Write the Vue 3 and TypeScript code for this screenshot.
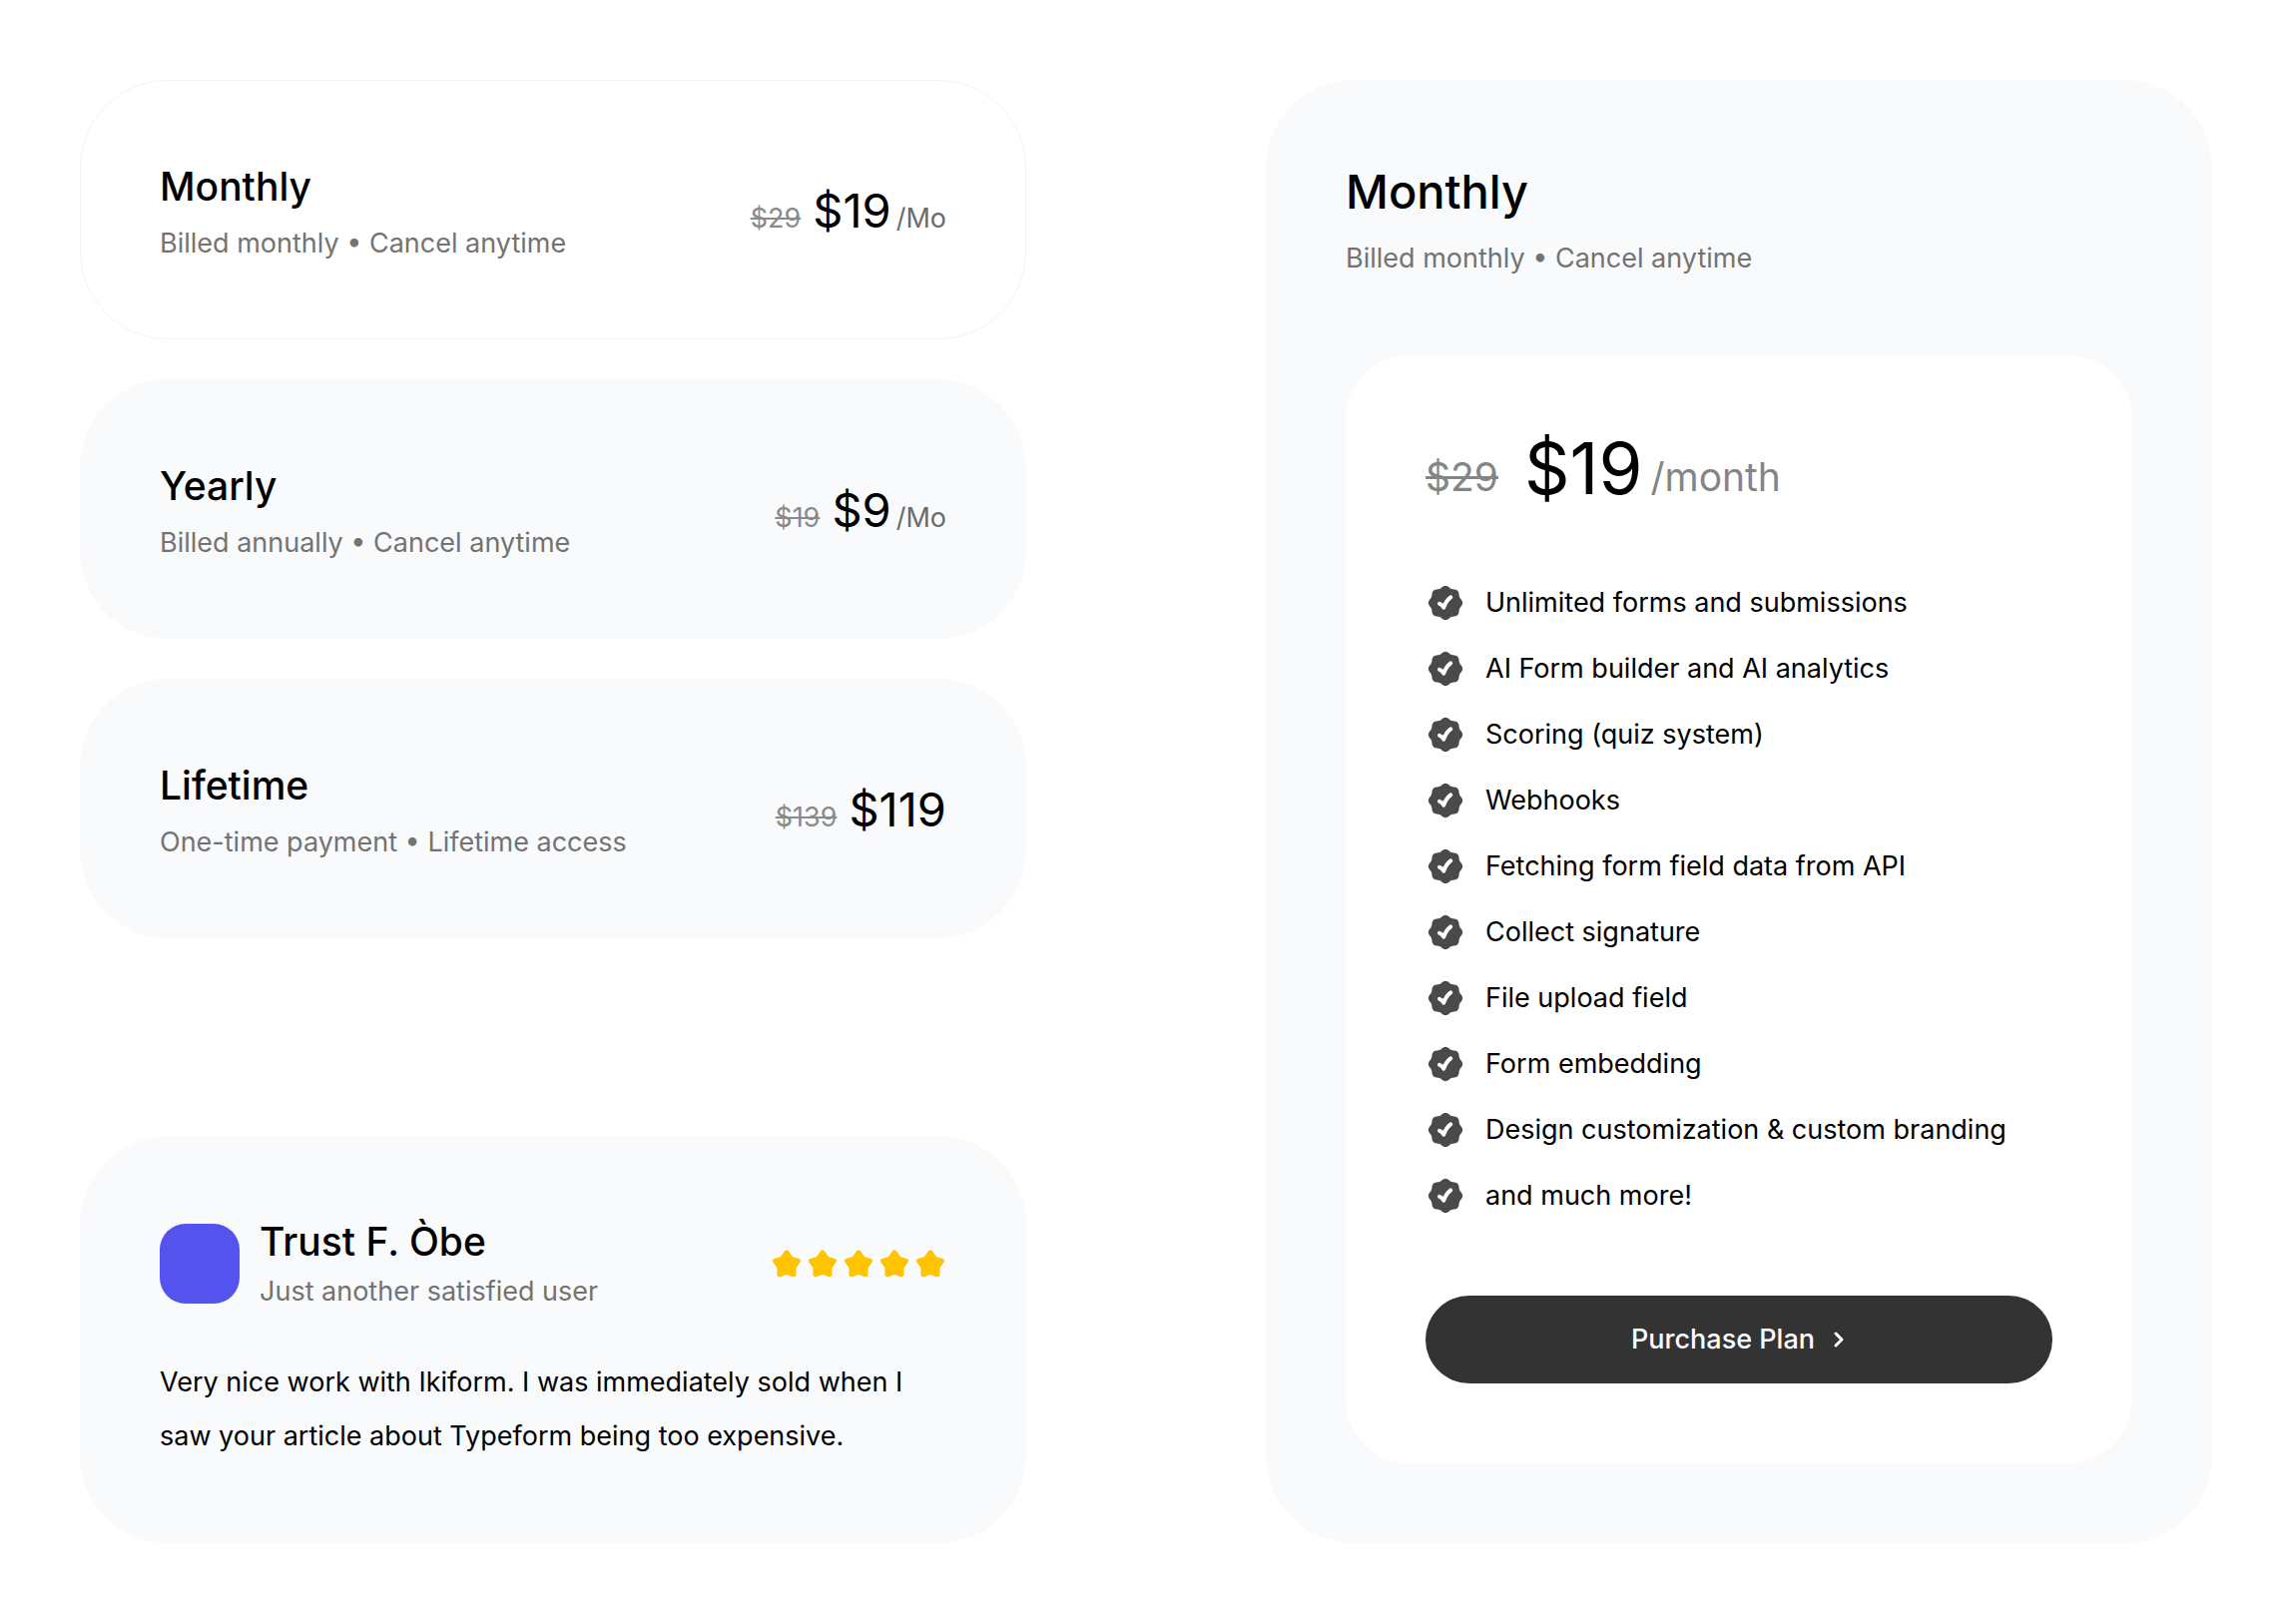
<script setup lang="ts">
import { computed, ref } from 'vue'

interface Plan {
  id: string
  name: string
  note: string
  was: string
  price: string
  unit: string
  longUnit: string
}

const plans: Plan[] = [
  { id: 'monthly', name: 'Monthly', note: 'Billed monthly • Cancel anytime', was: '$29', price: '$19', unit: '/Mo', longUnit: '/month' },
  { id: 'yearly', name: 'Yearly', note: 'Billed annually • Cancel anytime', was: '$19', price: '$9', unit: '/Mo', longUnit: '/month' },
  { id: 'lifetime', name: 'Lifetime', note: 'One-time payment • Lifetime access', was: '$139', price: '$119', unit: '', longUnit: '' },
]

const features: string[] = [
  'Unlimited forms and submissions',
  'AI Form builder and AI analytics',
  'Scoring (quiz system)',
  'Webhooks',
  'Fetching form field data from API',
  'Collect signature',
  'File upload field',
  'Form embedding',
  'Design customization & custom branding',
  'and much more!',
]

const selectedId = ref('monthly')
const selected = computed<Plan>(() => plans.find((p) => p.id === selectedId.value) ?? plans[0])

// Closed outline traced around a centre from a radius that varies with the angle.
function outline(cx: number, cy: number, steps: number, radius: (i: number, a: number) => number): string {
  const points = Array.from({ length: steps }, (_, i) => {
    const a = (i / steps) * Math.PI * 2
    const r = radius(i, a)
    return `${(cx + r * Math.sin(a)).toFixed(2)} ${(cy - r * Math.cos(a)).toFixed(2)}`
  })
  return `M${points.join('L')}Z`
}

const badgePath = outline(20, 20, 160, (_, a) => 16.2 + 0.95 * Math.cos(8 * a))
const starPath = outline(16, 17, 10, (i) => (i % 2 === 0 ? 12 : 7.4))
</script>

<template>
  <main class="page">
    <div class="column">
      <div class="plans">
        <button
          v-for="plan in plans"
          :key="plan.id"
          type="button"
          class="plan"
          :class="{ active: plan.id === selectedId }"
          :aria-pressed="plan.id === selectedId"
          @click="selectedId = plan.id"
        >
          <span class="plan-text">
            <span class="plan-name">{{ plan.name }}</span>
            <span class="note">{{ plan.note }}</span>
          </span>
          <span class="plan-price">
            <s class="was">{{ plan.was }}</s>
            <span class="now">{{ plan.price }}</span>
            <span v-if="plan.unit" class="unit">{{ plan.unit }}</span>
          </span>
        </button>
      </div>

      <article class="review">
        <header class="review-head">
          <div class="avatar"></div>
          <div class="author">
            <h3>Trust F. Òbe</h3>
            <p class="author-note">Just another satisfied user</p>
          </div>
          <div class="stars" role="img" aria-label="5 out of 5 stars">
            <svg v-for="n in 5" :key="n" viewBox="0 0 32 32" width="32" height="32" aria-hidden="true">
              <path :d="starPath" />
            </svg>
          </div>
        </header>
        <p class="quote">Very nice work with Ikiform. I was immediately sold when I saw your article about Typeform being too expensive.</p>
      </article>
    </div>

    <section class="detail">
      <h2>{{ selected.name }}</h2>
      <p class="detail-note">{{ selected.note }}</p>
      <div class="offer">
        <div class="offer-price">
          <s class="offer-was">{{ selected.was }}</s>
          <span class="offer-now">{{ selected.price }}</span>
          <span class="offer-unit">{{ selected.longUnit }}</span>
        </div>
        <ul class="features">
          <li v-for="feature in features" :key="feature">
            <svg viewBox="0 0 40 40" width="40" height="40" aria-hidden="true">
              <path class="badge" :d="badgePath" />
              <path class="tick" d="M14 20.8C15.8 21.4 17.2 22.6 18.2 24.6C19.6 20.6 22 16.8 25.2 14.4" />
            </svg>
            <span>{{ feature }}</span>
          </li>
        </ul>
        <button type="button" class="purchase">
          <span>Purchase Plan</span>
          <svg viewBox="0 0 14 18" width="14" height="18" aria-hidden="true">
            <path d="M3 3L9 9L3 15" />
          </svg>
        </button>
      </div>
    </section>
  </main>
</template>

<style>
body {
  background: #ffffff;
}
</style>

<style scoped>
.page {
  display: grid;
  grid-template-columns: minmax(0, 1fr) minmax(0, 1fr);
  gap: 240px;
  padding: 80px;
  color: #000000;
  font-family: Inter, 'Liberation Sans', sans-serif;
  font-size: 27px;
  line-height: 42px;
}

h2,
h3,
p,
ul {
  margin: 0;
  padding: 0;
}

button {
  font: inherit;
  cursor: pointer;
}

.column {
  display: flex;
  flex-direction: column;
  justify-content: space-between;
  gap: 40px;
}

.plans {
  display: flex;
  flex-direction: column;
  gap: 40px;
}

.plan {
  display: flex;
  align-items: center;
  justify-content: space-between;
  padding: 77px 79px 75px;
  border: 1px solid #f9fafc;
  border-radius: 88px;
  background: #f9fafc;
  color: inherit;
  text-align: left;
}

.plan.active {
  border-color: #f2f3f4;
  background: #ffffff;
}

.plan-text {
  display: flex;
  flex-direction: column;
  gap: 8px;
}

.plan-name {
  font-size: 39px;
  font-weight: 500;
  line-height: 58px;
}

.note {
  color: #737373;
  line-height: 40px;
}

.plan-price {
  display: flex;
  align-items: baseline;
}

.was {
  margin-right: 12px;
  color: #8a8a8a;
}

.now {
  font-size: 47px;
  line-height: 64px;
}

.unit {
  margin-left: 5px;
  color: #6b6b6b;
}

.review {
  display: flex;
  flex-direction: column;
  gap: 42px;
  padding: 78px 80px 80px;
  border-radius: 88px;
  background: #f9fafc;
}

.review-head {
  display: flex;
  align-items: center;
  gap: 20px;
}

.avatar {
  width: 80px;
  height: 80px;
  border-radius: 26px;
  background: #5553ee;
}

.author {
  flex: 1;
}

.author h3 {
  font-size: 39px;
  font-weight: 500;
  line-height: 56px;
}

.author-note {
  color: #737373;
  line-height: 44px;
}

.stars {
  display: flex;
  gap: 4px;
}

.stars path {
  fill: #ffc300;
  stroke: #ffc300;
  stroke-width: 5;
  stroke-linejoin: round;
}

.quote {
  line-height: 54px;
}

.detail {
  padding: 80px;
  border-radius: 88px;
  background: #f9fafc;
}

.detail h2 {
  font-size: 47px;
  font-weight: 500;
  line-height: 64px;
}

.detail-note {
  margin-top: 14px;
  color: #737373;
}

.offer {
  margin-top: 76px;
  padding: 80px;
  border-radius: 64px;
  background: #ffffff;
}

.offer-price {
  display: flex;
  align-items: flex-end;
  color: #858585;
  font-size: 39px;
  line-height: 48px;
}

.offer-was {
  margin-right: 26px;
}

.offer-now {
  color: #000000;
  font-size: 71px;
  line-height: 66px;
}

.offer-unit {
  margin-left: 8px;
}

.features {
  display: flex;
  flex-direction: column;
  gap: 24px;
  margin-top: 81px;
  list-style: none;
}

.features li {
  display: flex;
  align-items: center;
  gap: 20px;
}

.badge {
  fill: #4a4a4a;
}

.tick {
  fill: none;
  stroke: #ffffff;
  stroke-width: 4;
  stroke-linecap: round;
  stroke-linejoin: round;
}

.purchase {
  display: flex;
  align-items: center;
  justify-content: center;
  gap: 18px;
  width: 100%;
  margin-top: 79px;
  padding: 23px 40px;
  border: 0;
  border-radius: 44px;
  background: #333333;
  color: #ffffff;
  font-weight: 500;
}

.purchase path {
  fill: none;
  stroke: #ffffff;
  stroke-width: 3;
  stroke-linecap: round;
  stroke-linejoin: round;
}
</style>
